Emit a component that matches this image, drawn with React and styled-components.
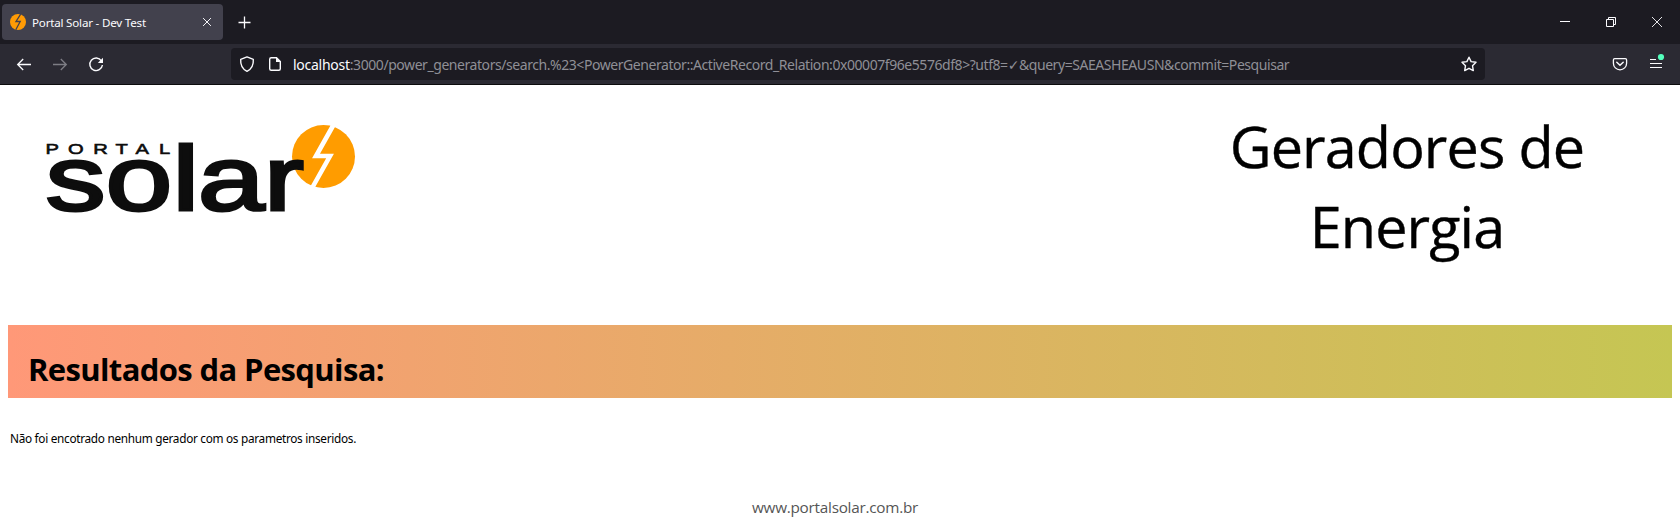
import React from "react";
import styled, { createGlobalStyle } from "styled-components";

const Global = createGlobalStyle`
  * { box-sizing: border-box; }
  html, body { margin: 0; background: #fff; overflow: hidden; }
  body { font-family: "Open Sans", "Noto Sans", sans-serif; color: #000; }
`;

const Window = styled.div`
  display: flex;
  flex-direction: column;
  width: 1680px;
  height: 517px;
  overflow: hidden;
`;

const TabStrip = styled.div`
  display: flex;
  flex: none;
  align-items: center;
  height: 44px;
  padding-left: 2px;
  background: #1c1b22;
  color: #fbfbfe;
`;

const Tab = styled.div`
  display: flex;
  align-items: center;
  width: 221px;
  height: 36px;
  padding: 0 9px 0 8px;
  border-radius: 4px;
  background: #42414d;
`;

const TabTitle = styled.span`
  flex: 1;
  margin-left: 6px;
  font-family: "Noto Sans", sans-serif;
  font-size: 11.6px;
  line-height: 18px;
  letter-spacing: -0.2px;
  padding-top: 1px;
  white-space: nowrap;
`;

const Icon = styled.svg.attrs({ fill: "none", stroke: "currentColor" })`
  display: block;
  flex: none;
  width: ${(p) => p.$size || 16}px;
  height: ${(p) => p.$size || 16}px;
  opacity: ${(p) => (p.$dim ? 0.4 : 1)};
  overflow: visible;
`;

const NewTab = styled.div`
  margin-left: 13px;
`;

const WindowControls = styled.div`
  display: flex;
  gap: 30px;
  margin-left: auto;
  padding-right: 15px;
`;

const Toolbar = styled.div`
  display: flex;
  flex: none;
  align-items: center;
  height: 41px;
  border-bottom: 1px solid #0c0c0d;
  background: #2b2a33;
  color: #fbfbfe;
`;

const NavButtons = styled.div`
  display: flex;
  gap: 20px;
  width: 231px;
  padding-left: 16px;
`;

const AddressBar = styled.div`
  display: flex;
  align-items: center;
  width: 1254px;
  height: 32px;
  padding: 0 8px;
  border-radius: 4px;
  background: #1c1b22;
`;

const AddressIcons = styled.div`
  display: flex;
  gap: 12px;
  margin-right: 10px;
`;

const Address = styled.div`
  flex: 1;
  padding-top: 2px;
  font-family: "Noto Sans", "DejaVu Sans", sans-serif;
  font-size: 14px;
  line-height: 20px;
  letter-spacing: -0.44px;
  color: #8f8f96;
  white-space: nowrap;
`;

const Host = styled.span`
  letter-spacing: -0.26px;
  color: #fbfbfe;
`;

const ToolbarActions = styled.div`
  display: flex;
  gap: 20px;
  margin-left: auto;
  padding-right: 16px;
`;

const Page = styled.main`
  display: flex;
  flex-direction: column;
  flex: 1;
  padding: 0 8px;
`;

const Header = styled.header`
  display: flex;
  flex: none;
  justify-content: space-between;
  height: 240px;
  padding: 25px 84px 0 22px;
`;

const Logo = styled.svg`
  display: block;
  width: 340px;
  height: 130px;
`;

const Title = styled.h1`
  width: 362px;
  margin: -4px 0 0;
  font-size: 57.5px;
  font-weight: 400;
  line-height: 80px;
  letter-spacing: -0.87px;
  text-align: center;
  -webkit-text-stroke: 0.4px #000;
`;

const Banner = styled.section`
  flex: none;
  height: 73px;
  padding: 22px 20px 0;
  background: linear-gradient(90deg, #ff9878, #c5c653);
`;

const BannerTitle = styled.h2`
  margin: 0;
  font-size: 31px;
  line-height: 44px;
  font-weight: 700;
  letter-spacing: -0.63px;
  white-space: nowrap;
`;

const Message = styled.p`
  margin: 31px 0 0 2px;
  font-family: "Noto Sans", sans-serif;
  font-size: 11.8px;
  line-height: 18px;
  letter-spacing: -0.3px;
  white-space: nowrap;
`;

const Footer = styled.footer`
  margin-top: 48px;
  padding-right: 10px;
  font-size: 15.3px;
  line-height: 24px;
  letter-spacing: -0.25px;
  color: #555;
  text-align: center;
`;

function Favicon() {
  return (
    <Icon viewBox="0 0 16 16">
      <circle cx="8" cy="8" r="8" fill="#ff9b05" stroke="none" />
      <path d="M10.7 .2 6 7.5h4.2L5.8 15.8" stroke="#42414d" strokeWidth="1.3" />
    </Icon>
  );
}

function PortalSolarLogo() {
  return (
    <Logo viewBox="0 0 340 130" role="img" aria-label="Portal Solar">
      <circle cx="293.5" cy="46.5" r="31.5" fill="#ff9c00" />
      <path d="M304 14 286 46H300L281.5 79" fill="none" stroke="#fff" strokeWidth="4.6" />
      <g fill="#0d0d0d" stroke="#0d0d0d" fontFamily="'Liberation Sans', Arial, sans-serif">
        <text transform="scale(1.3 1)" x="11.9 29.2 48.7 65.8 81.2 99.2" y="43.7" fontSize="15.5" strokeWidth=".6">PORTAL</text>
        <text transform="scale(1.32 1)" x="12 57.3 107.9 127.2 177.2" y="100.2" fontSize="90.5" strokeWidth="3">solar</text>
      </g>
    </Logo>
  );
}

export default function App() {
  return (
    <Window>
      <Global />
      <TabStrip>
        <Tab>
          <Favicon />
          <TabTitle>Portal Solar - Dev Test</TabTitle>
          <Icon viewBox="0 0 16 16" $size={14}><path d="M3.5 3.5l9 9M12.5 3.5l-9 9" strokeWidth="1.1" /></Icon>
        </Tab>
        <NewTab>
          <Icon viewBox="0 0 16 16"><path d="M8.5 2.5v12M2.5 8.5h12" strokeWidth="1.3" /></Icon>
        </NewTab>
        <WindowControls>
          <Icon viewBox="0 0 16 16"><path d="M3 7.5h10" /></Icon>
          <Icon viewBox="0 0 16 16"><path d="M3.5 5.5h7v7h-7zM5.5 5V3.5h7v7H11" /></Icon>
          <Icon viewBox="0 0 16 16"><path d="M3 3l10 10M13 3L3 13" strokeWidth=".9" /></Icon>
        </WindowControls>
      </TabStrip>
      <Toolbar>
        <NavButtons>
          <Icon viewBox="0 0 16 16"><path d="M15 8.5H1.8M7.2 3 1.7 8.5 7.2 14" strokeWidth="1.3" /></Icon>
          <Icon viewBox="0 0 16 16" $dim><path d="M1 8.5h13.2M8.8 3l5.5 5.5L8.8 14" strokeWidth="1.3" /></Icon>
          <Icon viewBox="0 0 16 16">
            <path d="M13.4 4.8A6.3 6.3 0 1 0 14.4 9" strokeWidth="1.4" />
            <path d="M15 1.8V7H9.8z" fill="currentColor" stroke="none" />
          </Icon>
        </NavButtons>
        <AddressBar>
          <AddressIcons>
            <Icon viewBox="0 0 16 16"><path d="M8 .9 14.3 3.4C14.7 9 11.8 13.5 8 15.3 4.2 13.5 1.3 9 1.7 3.4z" strokeWidth="1.4" strokeLinejoin="round" /></Icon>
            <Icon viewBox="0 0 16 16">
              <path d="M9.5 1.7H4.2Q2.7 1.7 2.7 3.2v9.6q0 1.5 1.5 1.5h7.6q1.5 0 1.5-1.5V5.5z" strokeWidth="1.4" />
              <path d="M9 1.5V6h4.8z" fill="currentColor" stroke="none" />
            </Icon>
          </AddressIcons>
          <Address>
            <Host>localhost</Host>:3000/power_generators/search.%23&lt;PowerGenerator::ActiveRecord_Relation:0x00007f96e5576df8&gt;?utf8=✓&amp;query=SAEASHEAUSN&amp;commit=Pesquisar
          </Address>
          <Icon viewBox="0 0 16 16"><path d="M8 1.2l2.1 4.4 4.9.7-3.5 3.4.8 4.9L8 12.3l-4.3 2.3.8-4.9L1 6.3l4.9-.7z" strokeWidth="1.4" strokeLinejoin="round" /></Icon>
        </AddressBar>
        <ToolbarActions>
          <Icon viewBox="0 0 16 16">
            <path d="M2.7 2.7h10.6q1.3 0 1.3 1.3v3.2a6.6 6.6 0 0 1-13.2 0V4q0-1.3 1.3-1.3z" strokeWidth="1.3" />
            <path d="M4.8 6.3 8 9.3l3.2-3" strokeWidth="1.5" strokeLinecap="round" />
          </Icon>
          <Icon viewBox="0 0 16 16">
            <path d="M2 3.5h6M2 7.5h12M2 11.5h12" strokeWidth="1.2" />
            <circle cx="13" cy="1" r="3.1" fill="#54ffbd" stroke="none" />
          </Icon>
        </ToolbarActions>
      </Toolbar>
      <Page>
        <Header>
          <PortalSolarLogo />
          <Title>Geradores de Energia</Title>
        </Header>
        <Banner>
          <BannerTitle>Resultados da Pesquisa:</BannerTitle>
        </Banner>
        <Message>Não foi encotrado nenhum gerador com os parametros inseridos.</Message>
        <Footer>www.portalsolar.com.br</Footer>
      </Page>
    </Window>
  );
}
